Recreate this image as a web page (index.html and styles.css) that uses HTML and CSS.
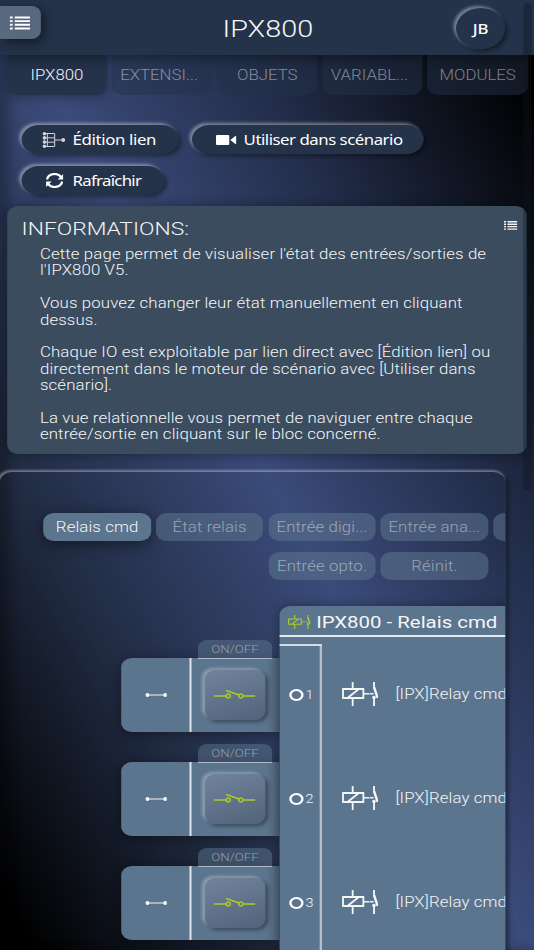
FILE: index.html
```
<!DOCTYPE html>
<html lang="fr">
<head>
  <meta charset="UTF-8" />
  <meta name="viewport" content="width=device-width, initial-scale=1.0" />
  <title>IPX800</title>
  <link rel="stylesheet" href="styles.css">
</head>
<body>
  <!-- Shared icons -->
  <svg class="sprite">
    <symbol id="icon-list" viewBox="0 0 20 16">
      <path d="M0 1.5h3M5 1.5h15M0 5.8h3M5 5.8h15M0 10.1h3M5 10.1h15M0 14.4h3M5 14.4h15" stroke="currentColor" stroke-width="2.3" />
    </symbol>
    <symbol id="icon-relay" viewBox="0 0 36 24" preserveAspectRatio="none">
      <g fill="none" stroke="currentColor" stroke-width="1.8">
        <path d="M1 7h20v9H1zM6 15.5L16 7.5M10.5 0v7M10.5 16v8M31.5 0v7M31.5 14v10" />
        <path d="M21 11.8h10" stroke-width="1.4" stroke-dasharray="6 .6" />
        <path d="M31.5 5L35 16" stroke-width="2.4" />
      </g>
      <circle cx="31.5" cy="15.5" r="1.8" fill="currentColor" />
    </symbol>
    <symbol id="icon-switch" viewBox="0 0 42 10" preserveAspectRatio="none">
      <g fill="none" stroke="currentColor" stroke-width="1.5">
        <path d="M0 7h12.500M29.500 7H42M12.500 1.500L25.500 6" />
        <circle cx="14.7" cy="7" r="2" />
        <circle cx="27.3" cy="7" r="2" />
      </g>
    </symbol>
    <symbol id="icon-link" viewBox="0 0 22 6" preserveAspectRatio="none">
      <path d="M2 3h18" stroke="currentColor" stroke-width="1.2" />
      <circle cx="2.2" cy="3" r="2" fill="currentColor" />
      <circle cx="19.8" cy="3" r="2" fill="currentColor" />
    </symbol>
  </svg>

  <div class="page">
    <header>
      <button class="menu-button"><svg class="icon-menu"><use href="#icon-list" /></svg></button>
      <h1>IPX800</h1>
      <button class="user">JB</button>
    </header>

    <nav class="tabs">
      <a class="tab active">IPX800</a>
      <a class="tab cut">EXTENSI...</a>
      <a class="tab">OBJETS</a>
      <a class="tab cut">VARIABL...</a>
      <a class="tab">MODULES</a>
    </nav>

    <div class="actions">
      <button class="action action-edit">
        <svg class="icon-edit" viewBox="0 0 24 16" preserveAspectRatio="none">
          <path d="M2 1.5h11v13H2M2 5.8h11M2 10.2h11M13 8h9M5.5 1v14" fill="none" stroke="currentColor" stroke-width="1" />
          <g fill="currentColor">
            <circle cx="2.5" cy="1.8" r="1.8" /><circle cx="2.5" cy="5.9" r="1.8" /><circle cx="2.5" cy="10.1" r="1.8" /><circle cx="2.5" cy="14.2" r="1.8" />
            <circle cx="21.8" cy="8" r="2" />
          </g>
        </svg>
        <span>Édition lien</span>
      </button>
      <button class="action action-scene">
        <svg class="icon-camera" viewBox="0 0 20 10" preserveAspectRatio="none">
          <rect width="13" height="10" rx="1" fill="currentColor" />
          <path d="M14 5l5-4q1-.5 1 .5v7q0 1-1 .5z" fill="currentColor" />
        </svg>
        <span>Utiliser dans scénario</span>
      </button>
      <button class="action action-refresh">
        <svg class="icon-refresh" viewBox="0 0 18 15" preserveAspectRatio="none">
          <path d="M1.5 6.5C2.5 0 12 -.5 15.5 4M16.5 8.5C15.5 15 6 15.5 2.5 11" fill="none" stroke="currentColor" stroke-width="2.2" />
          <path d="M17.5 1v5.5h-5.500zM.5 14v-5.500h5.500z" fill="currentColor" />
        </svg>
        <span>Rafraîchir</span>
      </button>
    </div>

    <section class="info">
      <svg class="icon-info"><use href="#icon-list" /></svg>
      <h2>INFORMATIONS:</h2>
      <p>Cette page permet de visualiser l'état des entrées/sorties de<br>l'IPX800 V5.</p>
      <p>Vous pouvez changer leur état manuellement en cliquant<br>dessus.</p>
      <p>Chaque IO est exploitable par lien direct avec [Édition lien] ou<br>directement dans le moteur de scénario avec [Utiliser dans<br>scénario].</p>
      <p>La vue relationnelle vous permet de naviguer entre chaque<br>entrée/sortie en cliquant sur le bloc concerné.</p>
    </section>

    <main class="panel">
      <div class="filters">
        <a class="filter active">Relais cmd</a>
        <a class="filter">État relais</a>
        <a class="filter">Entrée digi...</a>
        <a class="filter">Entrée ana...</a>
        <a class="filter"></a>
        <a class="filter third">Entrée opto.</a>
        <a class="filter">Réinit.</a>
      </div>

      <div class="board">
        <div class="links">
          <div class="link">
            <div class="link-end"><svg class="icon-link"><use href="#icon-link" /></svg></div>
            <div class="link-state"><span class="state-label">ON/OFF</span><button class="switch"><svg><use href="#icon-switch" /></svg></button></div>
          </div>
          <div class="link">
            <div class="link-end"><svg class="icon-link"><use href="#icon-link" /></svg></div>
            <div class="link-state"><span class="state-label">ON/OFF</span><button class="switch"><svg><use href="#icon-switch" /></svg></button></div>
          </div>
          <div class="link">
            <div class="link-end"><svg class="icon-link"><use href="#icon-link" /></svg></div>
            <div class="link-state"><span class="state-label">ON/OFF</span><button class="switch"><svg><use href="#icon-switch" /></svg></button></div>
          </div>
        </div>

        <section class="module">
          <h3><svg class="icon-title"><use href="#icon-relay" /></svg>IPX800 - Relais cmd</h3>
          <div class="module-body">
            <div class="ports">
              <div class="port"><i></i>1</div>
              <div class="port"><i></i>2</div>
              <div class="port"><i></i>3</div>
            </div>
            <div class="relays">
              <div class="relay"><svg><use href="#icon-relay" /></svg>[IPX]Relay cmd</div>
              <div class="relay"><svg><use href="#icon-relay" /></svg>[IPX]Relay cmd</div>
              <div class="relay"><svg><use href="#icon-relay" /></svg>[IPX]Relay cmd</div>
            </div>
          </div>
        </section>
      </div>
    </main>

    <div class="scrollbar"></div>
  </div>
</body>
</html>
```
FILE: styles.css
```
* {
  box-sizing: border-box;
}

body {
  margin: 0;
  height: 950px;
  overflow: hidden;
  font-family: Roboto, sans-serif;
  font-weight: 300;
  color: #f4f6f8;
  background: linear-gradient(to top right, #000 3%, #222d45 27%, #3b4b7a 50%, #232e4b 70%, #000 95%);
}

.sprite {
  display: none;
}

.page {
  position: relative;
  width: 445px;
  height: 950px;
  overflow: hidden;
  transform: scaleX(1.2);
  transform-origin: 0 0;
  box-shadow: inset 8px 0 10px rgba(0, 0, 0, 0.25);
}

button {
  border: 0;
  padding: 0;
  color: white;
  background: #24324a;
  font-family: "Noto Sans", sans-serif;
  font-weight: 400;
}

header {
  height: 55px;
  display: flex;
  align-items: center;
  justify-content: space-between;
  padding-right: 24px;
  background: #24324a;
  box-shadow: 0 2px 12px rgba(0, 0, 0, 0.5);
  position: relative;
  z-index: 2;
}

.menu-button {
  width: 33.5px;
  height: 33px;
  margin: -10px 0 0;
  padding-left: 5px;
  background: linear-gradient(110deg, #5a6a7d, #56677f);
  border-radius: 0 8px 8px 0;
  box-shadow: 3px 3px 10px rgba(0, 0, 0, 0.5);
}

.icon-menu {
  display: block;
  margin-left: 3px;
  width: 17px;
  height: 16px;
}

h1 {
  margin: 2px 0 0 33px;
  font-size: 24px;
  font-weight: 300;
}

.user {
  width: 41px;
  height: 41px;
  margin-top: 1px;
  border-radius: 50%;
  font-size: 14px;
  font-weight: 500;
}

.user,
.action {
  box-shadow: -2px -2px 3px rgba(255, 255, 255, 0.4), 2px 2px 4px rgba(0, 0, 0, 0.45);
}

.tabs {
  display: flex;
  gap: 4.3px;
  padding: 0 5.3px 0 5.8px;
}

.tab {
  flex: 1 0 0;
  height: 40px;
  line-height: 40px;
  text-align: center;
  font-size: 14px;
  white-space: nowrap;
  color: rgba(255, 255, 255, 0.45);
  background: rgba(36, 50, 74, 0.5);
  border-radius: 0 0 9px 9px;
}

.tab.cut {
  text-indent: -5px;
}

.tab.active {
  color: #f4f6f8;
  background: #24324a;
  box-shadow: 0 2px 10px rgba(0, 0, 0, 0.3);
}

.actions {
  display: flex;
  flex-wrap: wrap;
  gap: 12px 11px;
  padding: 30px 18px 11px;
}

.action {
  display: flex;
  align-items: center;
  height: 29px;
  border-radius: 15px;
  font-size: 14px;
  letter-spacing: -0.4px;
  white-space: nowrap;
}

.action-edit {
  width: 131px;
  padding-left: 17px;
  letter-spacing: -0.3px;
}

.action-scene {
  width: 193px;
  padding-left: 20px;
}

.action-refresh {
  width: 118.5px;
  padding-left: 20px;
  letter-spacing: -0.6px;
}

.icon-edit {
  width: 19.5px;
  height: 16px;
  margin-right: 6px;
  opacity: 0.8;
}

.icon-camera {
  width: 17px;
  height: 10px;
  margin-right: 6px;
}

.icon-refresh {
  width: 15px;
  height: 15px;
  margin-right: 7.5px;
}

.info {
  position: relative;
  height: 248px;
  margin: 0 6px;
  padding: 10px 12px 0;
  background: #3b4c5f;
  border-radius: 9px;
  box-shadow: 0 0 12px rgba(0, 0, 0, 0.4);
}

.info h2 {
  margin: 0 0 5px;
  font-size: 19px;
  line-height: 25px;
  font-weight: 300;
}

.info p {
  margin: 0 0 16.4px 15.3px;
  font-size: 14px;
  line-height: 16.4px;
  letter-spacing: 0.1px;
  white-space: nowrap;
}

.icon-info {
  position: absolute;
  right: 8px;
  top: 14px;
  width: 11.5px;
  height: 11px;
}

.panel {
  width: 420.5px;
  height: 500px;
  margin-top: 18px;
  padding-top: 41px;
  border-radius: 10px;
  box-shadow: -1px -2px 2px rgba(255, 255, 255, 0.35), 2px 2px 5px rgba(0, 0, 0, 0.5);
  overflow: hidden;
}

.filters {
  display: grid;
  grid-template-columns: repeat(5, 89.2px);
  gap: 11px 4.5px;
  padding-left: 36.4px;
}

.filter {
  height: 28px;
  line-height: 28px;
  border-radius: 9px;
  text-align: center;
  font-size: 14px;
  letter-spacing: 0.1px;
  white-space: nowrap;
  color: rgba(255, 255, 255, 0.45);
  background: rgba(92, 117, 142, 0.55);
}

.filter.active {
  color: #f4f6f8;
  background: #5c758e;
  box-shadow: 0 3px 14px rgba(0, 0, 0, 0.5);
}

.filter.third {
  grid-column: 3;
}

.board {
  display: flex;
  margin-top: 26px;
  padding-left: 101px;
}

.links {
  width: 131.5px;
  flex: none;
  padding-top: 51.5px;
}

.link {
  display: flex;
  height: 74px;
  margin-bottom: 30px;
  background: #5c758e;
  border-radius: 9px 0 0 9px;
  box-shadow: 0 2px 12px rgba(0, 0, 0, 0.4);
}

.link-end {
  width: 58px;
  display: flex;
  align-items: center;
  justify-content: center;
  border-right: 1px solid white;
  box-shadow: 0.5px 0 0 white;
}

.icon-link {
  width: 18.5px;
  height: 6px;
  margin-left: 1px;
}

.link-state {
  position: relative;
  flex: 1;
  padding: 12px 0 0 12px;
  background: linear-gradient(to right, transparent 85%, rgba(0, 0, 0, 0.15));
}

.state-label {
  position: absolute;
  left: 6px;
  top: -18px;
  width: 61.5px;
  height: 19px;
  line-height: 19px;
  text-align: center;
  font-size: 11px;
  color: rgba(255, 255, 255, 0.45);
  background: rgba(92, 117, 142, 0.5);
  border-bottom: 1px solid rgba(255, 255, 255, 0.5);
  border-radius: 8px 8px 0 0;
}

.switch {
  display: flex;
  align-items: center;
  justify-content: center;
  width: 50px;
  height: 50px;
  color: #a9cb2e;
  background: linear-gradient(160deg, #71849c, #51637a);
  border-radius: 9px;
  box-shadow: -2px -2px 3px rgba(255, 255, 255, 0.3), 2px 2px 4px rgba(0, 0, 0, 0.4);
}

.switch svg {
  width: 35px;
  height: 10px;
  margin: -2px 1px 0 0;
}

.module {
  width: 400px;
  height: 400px;
  flex: none;
  background: #5c758e;
  border-radius: 9px 9px 0 0;
  box-shadow: 0 0 10px rgba(0, 0, 0, 0.35);
}

.module h3 {
  display: flex;
  align-items: center;
  height: 31px;
  margin: 0;
  padding: 2px 0 0 7px;
  border-bottom: 2px solid #e6eaee;
  font-size: 17px;
  font-weight: 400;
}

.icon-title {
  width: 19px;
  height: 14px;
  margin: 0 5px 0 0;
  color: #a9cb2e;
}

.module-body {
  display: flex;
  padding-top: 7px;
}

.ports {
  width: 35.5px;
  height: 400px;
  border-top: 2px solid #d5dce3;
  border-right: 1px solid #f0f2f5;
  box-shadow: inset -0.5px 0 0 #f0f2f5;
}

.port,
.relay {
  display: flex;
  align-items: center;
  height: 104px;
}

.port {
  padding: 0 0 6px 8px;
  font-size: 12px;
}

.port i {
  width: 12px;
  height: 12px;
  margin-right: 2px;
  border: 2px solid white;
  border-radius: 50%;
}

.relay {
  padding: 0 0 5px 16.5px;
  font-size: 14px;
  letter-spacing: 0.1px;
  white-space: nowrap;
}

.relay svg {
  width: 30.5px;
  height: 24px;
  margin-right: 14.5px;
}

.scrollbar {
  position: absolute;
  right: 2px;
  top: 3px;
  width: 7.5px;
  height: 487px;
  border-radius: 4px;
  background: rgba(15, 20, 30, 0.35);
  z-index: 3;
}
```
